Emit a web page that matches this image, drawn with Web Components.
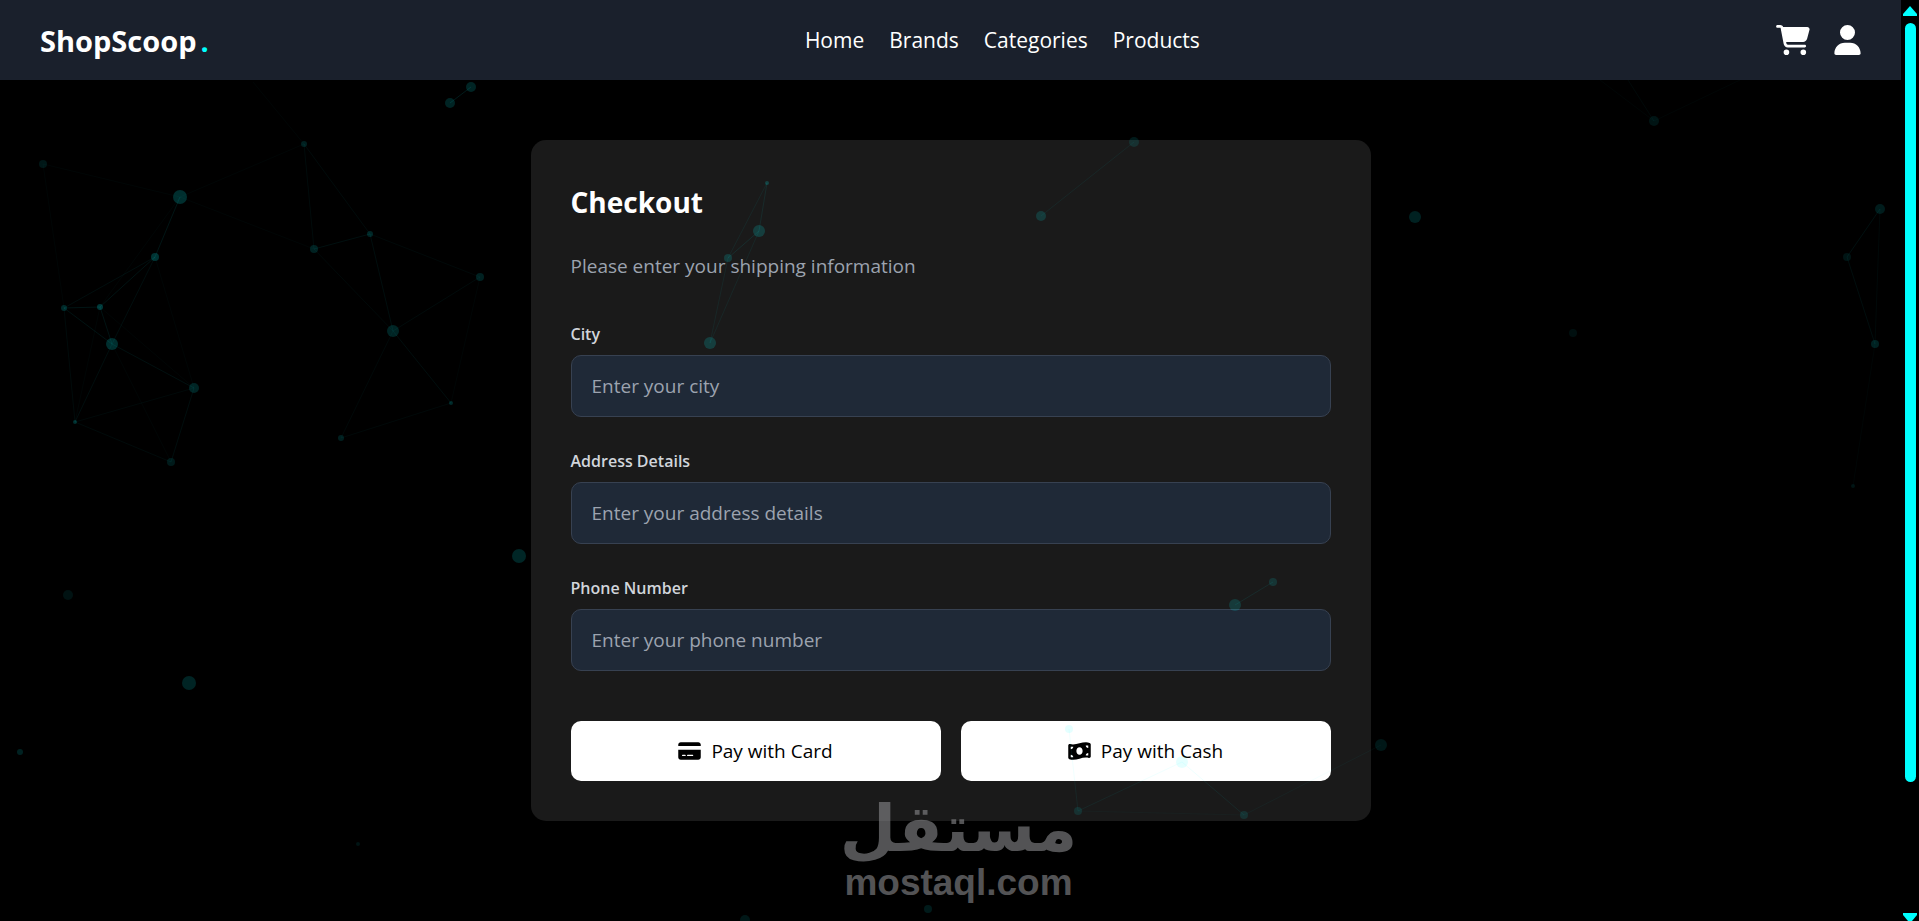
<!DOCTYPE html>
<html lang="en">
<head>
  <meta charset="utf-8">
  <title>ShopScoop</title>
  <style>
    html, body {
      margin: 0;
      height: 100%;
      background: black;
      overflow: hidden;
    }
    body {
      font-family: "Open Sans", "Noto Sans", sans-serif;
      font-size: 19px;
      color: white;
    }
  </style>
</head>
<body>
<shop-app>
  <shop-nav slot="header">
    <a href="#home">Home</a>
    <a href="#brands">Brands</a>
    <a href="#categories">Categories</a>
    <a href="#products">Products</a>
  </shop-nav>
  <checkout-card heading="Checkout" note="Please enter your shipping information">
    <form-field name="city" label="City" type="text" placeholder="Enter your city"></form-field>
    <form-field name="details" label="Address Details" type="text" placeholder="Enter your address details"></form-field>
    <form-field name="phone" label="Phone Number" type="tel" placeholder="Enter your phone number"></form-field>
    <pay-button slot="actions" icon="card">Pay with Card</pay-button>
    <pay-button slot="actions" icon="cash">Pay with Cash</pay-button>
  </checkout-card>
</shop-app>

<script>
  const ICONS = {
    cart: `<svg viewBox="0 0 576 512" width="34" height="30" fill="currentColor" aria-hidden="true"><path d="M0 24C0 10.700 10.700 0 24 0H69.500c22 0 41.500 12.800 50.600 32h411c26.300 0 45.500 25 38.600 50.400l-41 152.300c-8.500 31.400-37 53.300-69.500 53.300H170.700l5.400 28.500c2.200 11.300 12.100 19.500 23.600 19.500H488c13.300 0 24 10.700 24 24s-10.700 24-24 24H199.700c-34.600 0-64.300-24.600-70.700-58.500L77.400 54.500c-.7-3.800-4-6.500-7.900-6.500H24C10.700 48 0 37.300 0 24zM128 464a48 48 0 1 1 96 0 48 48 0 1 1-96 0zm336-48a48 48 0 1 1 0 96 48 48 0 1 1 0-96z"/></svg>`,
    user: `<svg viewBox="0 0 448 512" width="27" height="30" fill="currentColor" aria-hidden="true"><path d="M224 256A128 128 0 1 0 224 0a128 128 0 1 0 0 256zm-45.700 48C79.800 304 0 383.800 0 482.300 0 498.700 13.300 512 29.700 512h388.600c16.400 0 29.700-13.300 29.700-29.700C448 383.800 368.200 304 269.700 304z"/></svg>`,
    card: `<svg viewBox="0 0 576 512" width="23" height="20" fill="currentColor" aria-hidden="true"><path d="M64 32C28.700 32 0 60.700 0 96v32h576V96c0-35.300-28.700-64-64-64zM576 224H0v192c0 35.300 28.700 64 64 64h448c35.300 0 64-28.700 64-64zM112 352h64c8.800 0 16 7.200 16 16s-7.200 16-16 16h-64c-8.800 0-16-7.200-16-16s7.200-16 16-16zm112 16c0-8.800 7.200-16 16-16h128c8.800 0 16 7.200 16 16s-7.200 16-16 16H240c-8.800 0-16-7.200-16-16z"/></svg>`,
    cash: `<svg viewBox="0 0 576 512" width="23" height="20" fill="currentColor" aria-hidden="true"><path d="M0 112.500v310.200c0 18 10.100 35 27 41.300 87 32.500 174 10.300 261-11.900 79.800-20.300 159.600-40.700 239.300-18.900 23 6.300 48.700-9.500 48.700-33.400V89.400c0-18-10.100-35-27-41.300C462 15.900 375 38.100 288 60.300 208.200 80.600 128.400 100.900 48.700 79.100 25.600 72.800 0 88.600 0 112.500zM288 352c-44.200 0-80-43-80-96s35.800-96 80-96 80 43 80 96-35.800 96-80 96zM64 352c35.300 0 64 28.700 64 64H64zm64-208c0 35.300-28.700 64-64 64v-64zm384 160v64h-64c0-35.300 28.700-64 64-64zm-64-192h64v64c-35.300 0-64-28.700-64-64z"/></svg>`,
  };

  function template(html) {
    const el = document.createElement('template');
    el.innerHTML = html;
    return el;
  }

  class BaseElement extends HTMLElement {
    constructor(tpl) {
      super();
      this.root = this.attachShadow({mode: 'open'});
      this.root.appendChild(tpl.content.cloneNode(true));
    }
  }

  const appTemplate = template(`
    <style>
      :host {
        display: flex;
        height: 100vh;
      }
      .page {
        flex: 1;
        min-width: 0;
        position: relative;
        overflow: hidden;
      }
      main {
        display: flex;
        justify-content: center;
        padding: 60px 20px;
      }
    </style>
    <div class="page">
      <slot name="header"></slot>
      <main><slot></slot></main>
      <particle-field></particle-field>
      <site-mark></site-mark>
    </div>
    <scroll-rail></scroll-rail>
  `);
  customElements.define('shop-app', class ShopApp extends BaseElement {
    constructor() { super(appTemplate); }
  });

  const navTemplate = template(`
    <style>
      :host {
        display: block;
        position: relative;
        z-index: 3;
        background: #1a202c;
      }
      header {
        display: flex;
        justify-content: space-between;
        align-items: center;
        height: 80px;
        padding: 0 40px;
      }
      a {
        color: white;
        text-decoration: none;
      }
      .logo {
        padding-right: 20px;
        font-size: 29px;
        font-weight: 700;
      }
      .logo span {
        margin-left: 4px;
        color: aqua;
      }
      nav {
        display: flex;
        gap: 25px;
      }
      ::slotted(a) {
        color: white;
        font-size: 21px;
        text-decoration: none;
      }
      .icons {
        display: flex;
        gap: 24px;
      }
      svg { display: block; }
    </style>
    <header>
      <a class="logo" href="#">ShopScoop<span>.</span></a>
      <nav><slot></slot></nav>
      <div class="icons">
        <a href="#cart" aria-label="Cart">${ICONS.cart}</a>
        <a href="#account" aria-label="Account">${ICONS.user}</a>
      </div>
    </header>
  `);
  customElements.define('shop-nav', class ShopNav extends BaseElement {
    constructor() { super(navTemplate); }
  });

  const cardTemplate = template(`
    <style>
      :host {
        display: block;
        width: 100%;
        max-width: 840px;
      }
      form {
        padding: 40px;
        border-radius: 15px;
        background: #1a1a1a;
      }
      h1 {
        margin: 0 0 28px;
        font-size: 28px;
        line-height: 44px;
      }
      p {
        margin: 0 0 40px;
        color: #9ca3af;
        line-height: 28px;
      }
      .fields {
        display: flex;
        flex-direction: column;
        gap: 30px;
      }
      .actions {
        display: flex;
        gap: 20px;
        margin-top: 50px;
      }
    </style>
    <form>
      <h1></h1>
      <p></p>
      <div class="fields"><slot></slot></div>
      <div class="actions"><slot name="actions"></slot></div>
    </form>
  `);
  customElements.define('checkout-card', class CheckoutCard extends BaseElement {
    constructor() {
      super(cardTemplate);
      this.root.querySelector('h1').textContent = this.getAttribute('heading');
      this.root.querySelector('p').textContent = this.getAttribute('note');
    }
  });

  const fieldTemplate = template(`
    <style>
      :host { display: block; }
      label {
        display: block;
        margin-bottom: 7px;
        font-size: 16px;
        font-weight: 600;
        line-height: 28px;
        color: #d1d5db;
      }
      input {
        display: block;
        box-sizing: border-box;
        width: 100%;
        height: 62px;
        padding: 0 20px;
        border: 1px solid #374151;
        border-radius: 10px;
        background: #1f2937;
        color: white;
        font: inherit;
        outline: none;
      }
      input::placeholder { color: #9ca3af; }
      input:focus { border-color: aqua; }
    </style>
    <label for="field"></label>
    <input id="field">
  `);
  customElements.define('form-field', class FormField extends BaseElement {
    constructor() {
      super(fieldTemplate);
      const input = this.root.querySelector('input');
      this.root.querySelector('label').textContent = this.getAttribute('label');
      ['name', 'type', 'placeholder'].forEach(key => input.setAttribute(key, this.getAttribute(key)));
    }
  });

  const payTemplate = template(`
    <style>
      :host {
        display: block;
        flex: 1;
      }
      button {
        display: flex;
        align-items: center;
        justify-content: center;
        gap: 10px;
        width: 100%;
        height: 60px;
        border: 0;
        border-radius: 10px;
        background: white;
        color: black;
        font: inherit;
        font-weight: 500;
        cursor: pointer;
      }
    </style>
    <button type="button"><span class="icon"></span><span><slot></slot></span></button>
  `);
  customElements.define('pay-button', class PayButton extends BaseElement {
    constructor() {
      super(payTemplate);
      this.root.querySelector('.icon').outerHTML = ICONS[this.getAttribute('icon')];
    }
  });

  // x, y, radius, opacity
  const NODES = [
    [450, 103, 5, .14], [471, 87, 5, .14], [43, 164, 4, .09], [180, 197, 7, .18],
    [155, 257, 4, .2], [64, 308, 3, .16], [100, 307, 3, .22], [112, 344, 6, .18],
    [75, 422, 2, .18], [194, 388, 5, .14], [171, 462, 4, .1], [304, 144, 3, .12],
    [314, 249, 4, .13], [370, 234, 3, .15], [480, 277, 4, .13], [393, 331, 6, .14],
    [451, 403, 2, .16], [341, 438, 3, .12], [519, 556, 7, .15], [68, 595, 5, .07],
    [189, 683, 7, .14], [20, 752, 3, .13], [358, 844, 2, .08], [767, 183, 2, .18],
    [759, 231, 6, .16], [728, 258, 4, .15], [710, 343, 6, .16], [1134, 142, 5, .1],
    [1041, 216, 5, .14], [1415, 217, 6, .13], [1654, 121, 5, .08], [1573, 333, 4, .06],
    [1880, 209, 5, .11], [1847, 257, 4, .08], [1875, 344, 4, .13], [1853, 486, 2, .08],
    [1235, 605, 6, .14], [1273, 582, 4, .12], [1069, 729, 4, .1], [1182, 762, 6, .1],
    [1078, 811, 4, .1], [1244, 815, 4, .1], [1381, 745, 6, .09], [928, 909, 4, .1],
    [745, 920, 5, .09],
  ];
  // from, to, opacity
  const LINKS = [
    [0, 1, .1], [2, 3, .02], [2, 5, .02], [3, 4, .08], [3, 6, .02], [3, 11, .02], [3, 12, .02],
    [4, 5, .05], [4, 6, .07], [4, 7, .05], [4, 9, .02], [5, 6, .08], [5, 7, .07], [5, 8, .04],
    [6, 7, .07], [6, 8, .02], [6, 9, .02], [7, 8, .05], [7, 9, .06], [7, 10, .02], [8, 9, .03],
    [8, 10, .04], [9, 10, .05], [11, 12, .04], [11, 13, .04], [12, 13, .06], [12, 15, .03],
    [13, 14, .03], [13, 15, .05], [14, 15, .04], [14, 16, .02], [15, 16, .05], [15, 17, .03],
    [16, 17, .03], [23, 24, .07], [23, 25, .05], [24, 25, .08], [24, 26, .05], [25, 26, .05],
    [27, 28, .05], [32, 33, .06], [32, 34, .03], [33, 34, .05], [34, 35, .02], [36, 37, .07],
    [38, 40, .05], [39, 40, .05], [39, 41, .06], [40, 41, .02], [41, 42, .03],
  ];
  const particleTemplate = template(`
    <style>
      :host {
        position: absolute;
        inset: 0;
        z-index: 1;
        pointer-events: none;
      }
      svg { display: block; }
    </style>
    <svg width="100%" height="100%" fill="aqua" stroke="aqua" aria-hidden="true">
      ${LINKS.map(([a, b, o]) => `<line x1="${NODES[a][0]}" y1="${NODES[a][1]}" x2="${NODES[b][0]}" y2="${NODES[b][1]}" opacity="${o}"/>`).join('')}
      <line x1="304" y1="144" x2="253" y2="82" opacity=".02"/>
      <line x1="1654" y1="121" x2="1600" y2="80" opacity=".02"/>
      <line x1="1654" y1="121" x2="1628" y2="80" opacity=".03"/>
      <line x1="1654" y1="121" x2="1740" y2="80" opacity=".02"/>
      ${NODES.map(([x, y, r, o]) => `<circle cx="${x}" cy="${y}" r="${r}" opacity="${o}" stroke="none"/>`).join('')}
    </svg>
  `);
  customElements.define('particle-field', class ParticleField extends BaseElement {
    constructor() { super(particleTemplate); }
  });

  const markTemplate = template(`
    <style>
      :host {
        position: absolute;
        left: 0;
        right: 0;
        bottom: 16px;
        z-index: 2;
        display: flex;
        flex-direction: column;
        align-items: center;
        padding-left: 16px;
        color: #8a8b8e;
        opacity: .6;
        font-weight: 700;
        pointer-events: none;
      }
      .ar {
        font-family: "DejaVu Sans", sans-serif;
        font-size: 65px;
        line-height: 64px;
      }
      .en {
        font-family: "Liberation Sans", sans-serif;
        font-size: 37px;
        line-height: 44px;
      }
    </style>
    <span class="ar" lang="ar" dir="rtl">مستقل</span>
    <span class="en">mostaql.com</span>
  `);
  customElements.define('site-mark', class SiteMark extends BaseElement {
    constructor() { super(markTemplate); }
  });

  const railTemplate = template(`
    <style>
      :host {
        display: flex;
        flex-direction: column;
        align-items: center;
        box-sizing: border-box;
        width: 18px;
        padding-top: 6px;
        background: black;
      }
      svg {
        display: block;
        fill: aqua;
      }
      .track {
        flex: 1;
        padding: 7px 0 8px;
      }
      .thumb {
        width: 11px;
        height: 86%;
        border-radius: 6px;
        background: aqua;
      }
    </style>
    <svg width="14" height="10" viewBox="0 0 14 10"><path d="M7 0 14 8v2H0V8z"/></svg>
    <div class="track"><div class="thumb"></div></div>
    <svg width="14" height="8" viewBox="0 0 14 8"><path d="M0 0h14v2L9 8H5L0 2z"/></svg>
  `);
  customElements.define('scroll-rail', class ScrollRail extends BaseElement {
    constructor() { super(railTemplate); }
  });
</script>
</body>
</html>
